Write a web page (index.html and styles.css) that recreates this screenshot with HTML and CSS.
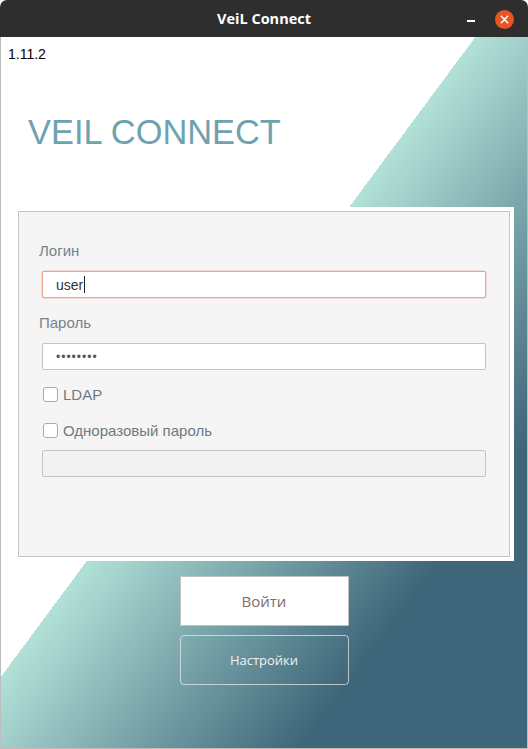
FILE: index.html
```html
<!DOCTYPE html>
<html lang="ru">
<head>
<meta charset="utf-8">
<title>VeiL Connect</title>
<link rel="stylesheet" href="styles.css">
</head>
<body>
<div class="window">
  <header class="titlebar">
    <span></span>
    <span class="title">VeiL Connect</span>
    <div class="controls">
      <span class="min"></span>
      <span class="close">
        <svg width="19" height="19" viewBox="0 0 19 19"><circle cx="9.5" cy="9.5" r="9.5" fill="#e95420"/><path d="M6.3 6.3 L12.7 12.7 M12.7 6.3 L6.3 12.7" stroke="#fff" stroke-width="1.5" stroke-linecap="round"/></svg>
      </span>
    </div>
  </header>
  <main class="content">
    <div class="version">1.11.2</div>
    <h1 class="brand">VEIL CONNECT</h1>
    <div class="card">
      <div class="panel">
        <div class="field-label">Логин</div>
        <div class="input focused"><span class="value">user</span><span class="caret"></span></div>
        <div class="field-label second">Пароль</div>
        <div class="input"><span class="dots">••••••••</span></div>
        <div class="check-row"><span class="checkbox"></span><span class="check-text">LDAP</span></div>
        <div class="check-row second"><span class="checkbox"></span><span class="check-text">Одноразовый пароль</span></div>
        <div class="input disabled"></div>
      </div>
    </div>
    <div class="actions">
      <button class="btn btn-primary">Войти</button>
      <button class="btn btn-secondary">Настройки</button>
    </div>
  </main>
</div>
</body>
</html>
```
FILE: styles.css
```css
html, body {
  margin: 0;
  background: #fff;
}
.window {
  width: 528px;
  height: 749px;
  display: flex;
  flex-direction: column;
}
.titlebar {
  height: 37px;
  flex-shrink: 0;
  background: #2f2e2e;
  border-radius: 7px 7px 0 0;
  display: grid;
  grid-template-columns: 1fr auto 1fr;
  align-items: center;
}
.title {
  color: #fff;
  font: 700 14.5px/20px "Open Sans", sans-serif;
  padding-top: 1px;
}
.controls {
  justify-self: end;
  display: flex;
  align-items: center;
  gap: 20px;
  padding-right: 14px;
  padding-top: 1px;
}
.min {
  width: 8px;
  height: 1.5px;
  background: #fff;
  margin-top: 4px;
}
.close {
  display: flex;
}
.content {
  flex: 1;
  border: 1px solid #bdbdbd;
  border-top: 0;
  background: linear-gradient(126.56deg, #fff 381px, #b2e1d8 381px, #3e6579 665px);
  padding-top: 9px;
  font-family: "Liberation Sans", Arial, sans-serif;
}
.version {
  margin-left: 7px;
  font-size: 14px;
  line-height: 16px;
  color: #000;
}
.brand {
  margin: 51px 0 0 27px;
  font-size: 34.4px;
  font-weight: 400;
  line-height: 39px;
  color: #6ea2b0;
}
.card {
  margin: 55px 0 0 13px;
  width: 500px;
  padding: 4px;
  box-sizing: border-box;
  background: #fff;
}
.panel {
  height: 346px;
  box-sizing: border-box;
  border: 1px solid #c6c6c6;
  background: #f5f5f5;
  padding: 30px 23px 0;
  display: flex;
  flex-direction: column;
}
.field-label {
  margin-left: -3px;
  font-size: 15px;
  line-height: 17px;
  color: #78818c;
}
.field-label.second {
  margin-top: 16px;
}
.input {
  height: 27px;
  box-sizing: border-box;
  border: 1px solid #c4c4c4;
  border-radius: 2px;
  background: #fff;
  margin-top: 12px;
  padding-left: 13px;
  display: flex;
  align-items: center;
  font-size: 14px;
  color: #333;
}
.input.focused {
  border-color: #eea48d;
  box-shadow: 0 0 0 0.5px rgba(238, 164, 141, 0.6);
}
.caret {
  width: 1px;
  height: 17px;
  background: #222;
  margin-left: 1px;
}
.dots {
  font-size: 12px;
  letter-spacing: 1px;
  color: #555;
}
.check-row {
  display: flex;
  align-items: center;
  gap: 5px;
  height: 16px;
  margin-top: 16px;
}
.check-row.second {
  margin-top: 20px;
}
.checkbox {
  width: 15px;
  height: 15px;
  box-sizing: border-box;
  margin-left: 1px;
  border: 1px solid #a9a9a9;
  border-radius: 3px;
  background: #fff;
}
.check-text {
  font-size: 15px;
  line-height: 17px;
  color: #6f7984;
}
.input.disabled {
  margin-top: 12px;
  background: #f1f2f4;
}
.actions {
  margin-top: 15px;
  display: flex;
  flex-direction: column;
  align-items: center;
  gap: 9px;
}
.btn {
  width: 169px;
  height: 50px;
  box-sizing: border-box;
  font-family: "Open Sans", sans-serif;
  cursor: pointer;
}
.btn-primary {
  background: #fff;
  border: 1px solid #c2c2c2;
  border-radius: 1px;
  color: #7d6c6c;
  font-size: 15px;
}
.btn-secondary {
  background: transparent;
  border: 1px solid rgba(235, 240, 240, 0.7);
  border-radius: 4px;
  color: #eef3f4;
  font-size: 13px;
}
```
